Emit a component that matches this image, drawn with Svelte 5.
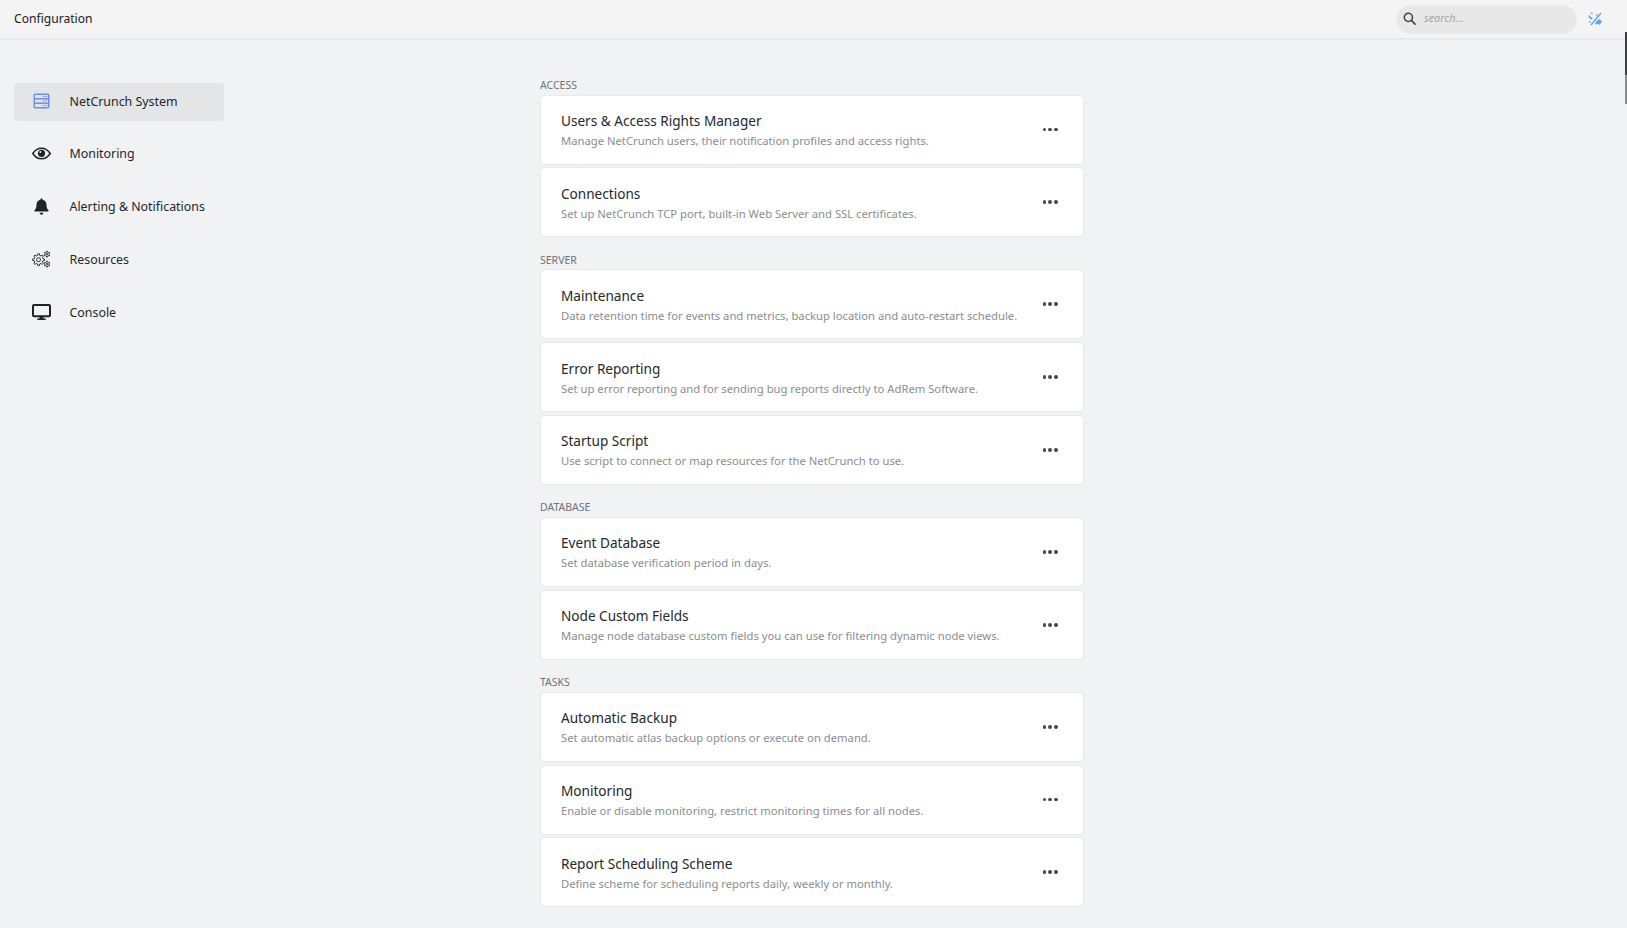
<script>
  function gear(cx, cy, rOut, rIn, teeth) {
    const pts = [];
    const step = (Math.PI * 2) / teeth;
    for (let i = 0; i < teeth; i++) {
      const a = i * step - Math.PI / 2;
      const w = step * 0.2;
      [[a - w * 1.5, rIn], [a - w * 0.8, rOut], [a + w * 0.8, rOut], [a + w * 1.5, rIn]].forEach(([t, r]) => {
        pts.push((cx + r * Math.cos(t)).toFixed(2) + ' ' + (cy + r * Math.sin(t)).toFixed(2));
      });
    }
    return 'M' + pts.join('L') + 'Z';
  }
  const nav = [
    { label: 'NetCrunch System', icon: 'server', active: true },
    { label: 'Monitoring', icon: 'eye' },
    { label: 'Alerting & Notifications', icon: 'bell' },
    { label: 'Resources', icon: 'gears' },
    { label: 'Console', icon: 'desktop' }
  ];
  const sections = [
    { title: 'ACCESS', items: [
      ['Users & Access Rights Manager', 'Manage NetCrunch users, their notification profiles and access rights.'],
      ['Connections', 'Set up NetCrunch TCP port, built-in Web Server and SSL certificates.']
    ]},
    { title: 'SERVER', items: [
      ['Maintenance', 'Data retention time for events and metrics, backup location and auto-restart schedule.'],
      ['Error Reporting', 'Set up error reporting and for sending bug reports directly to AdRem Software.'],
      ['Startup Script', 'Use script to connect or map resources for the NetCrunch to use.']
    ]},
    { title: 'DATABASE', items: [
      ['Event Database', 'Set database verification period in days.'],
      ['Node Custom Fields', 'Manage node database custom fields you can use for filtering dynamic node views.']
    ]},
    { title: 'TASKS', items: [
      ['Automatic Backup', 'Set automatic atlas backup options or execute on demand.'],
      ['Monitoring', 'Enable or disable monitoring, restrict monitoring times for all nodes.'],
      ['Report Scheduling Scheme', 'Define scheme for scheduling reports daily, weekly or monthly.']
    ]}
  ];
</script>

<div class="page">
  <header>
    <span class="title">Configuration</span>
    <div class="tools">
      <div class="search">
        <svg width="13" height="13" viewBox="0 0 14 14" fill="none" stroke="#444" stroke-width="1.7"><circle cx="5.8" cy="5.8" r="4.4"/><path d="M9 9l4 4" stroke-linecap="round"/></svg>
        <span class="ph">search...</span>
      </div>
      <svg class="magic" width="15" height="14" viewBox="0 0 15 14" fill="none" stroke="#5ba4f5" stroke-width="1.4">
        <path d="M3 13L13 1" />
        <path d="M1 3.5a4 4 0 0 0 3.5 3.2M3 .8l1.5 1.2" />
        <path d="M7 12.5l1-3 3.5-2.5 2.5 2.5-1 1-1 2.5-2-1z" fill="#5ba4f5" stroke="none"/>
        <path d="M8 3h1.5M1 10h1.5" />
      </svg>
    </div>
  </header>

  <div class="body">
    <nav>
      {#each nav as n}
        <div class="nav-item" class:active={n.active}>
          <span class="ico">
            {#if n.icon === 'server'}
              <svg width="17" height="16" viewBox="0 0 17 16"><rect x="0.5" y="0.5" width="16" height="15" rx="1.5" fill="#6f90e6"/><rect x="2" y="2" width="13" height="3" fill="#dfe2ec"/><rect x="2" y="6.5" width="13" height="3" fill="#dfe2ec"/><rect x="2" y="11" width="13" height="3" fill="#dfe2ec"/><rect x="10" y="3" width="1.5" height="1" fill="#6f8fe0"/><rect x="12.5" y="3" width="1.5" height="1" fill="#6f8fe0"/><rect x="10" y="7.5" width="1.5" height="1" fill="#6f8fe0"/><rect x="12.5" y="7.5" width="1.5" height="1" fill="#6f8fe0"/><rect x="10" y="12" width="1.5" height="1" fill="#6f8fe0"/><rect x="12.5" y="12" width="1.5" height="1" fill="#6f8fe0"/></svg>
            {:else if n.icon === 'eye'}
              <svg width="19" height="13" viewBox="0 0 19 13"><path d="M0.8 6.5C3 3 6 1.2 9.5 1.2S16 3 18.2 6.5C16 10 13 11.8 9.5 11.8S3 10 0.8 6.5z" fill="none" stroke="#1f2328" stroke-width="1.5"/><circle cx="9.5" cy="6.3" r="3.6" fill="#1f2328"/><circle cx="8.3" cy="5" r="1" fill="#f1f2f4"/></svg>
            {:else if n.icon === 'bell'}
              <svg width="15" height="17" viewBox="0 0 15 17"><path d="M7.5 0.5c.7 0 1.1.5 1.1 1.2 2.6.5 3.9 2.5 3.9 5 0 3 .7 4.3 2 5.6.4.5.1 1.2-.6 1.2H1.1c-.7 0-1-.7-.6-1.2 1.3-1.3 2-2.6 2-5.6 0-2.5 1.3-4.5 3.9-5 0-.7.4-1.2 1.1-1.2z" fill="#1f2328"/><path d="M5.6 14.8h3.8a1.9 1.9 0 0 1-3.8 0z" fill="#1f2328"/></svg>
            {:else if n.icon === 'gears'}
              <svg width="21" height="19" viewBox="0 0 21 19" fill="none" stroke="#2c3035" stroke-width="1.1" stroke-linejoin="round">
                <path d={gear(7.3, 9.7, 6.6, 4.9, 8)}/>
                <circle cx="7.3" cy="9.7" r="2.2"/>
                <path d={gear(16.6, 3.6, 3.2, 2.3, 6)}/>
                <circle cx="16.6" cy="3.6" r="0.9"/>
                <path d={gear(16.6, 14.6, 3.2, 2.3, 6)}/>
                <circle cx="16.6" cy="14.6" r="0.9"/>
              </svg>
            {:else}
              <svg width="19" height="17" viewBox="0 0 19 17"><rect x="1" y="1" width="17" height="11.2" rx="1" fill="none" stroke="#1f2328" stroke-width="2"/><path d="M7.5 12.5h4v2h2.2v1.6H5.3v-1.6h2.2z" fill="#1f2328"/></svg>
            {/if}
          </span>
          <span class="lbl">{n.label}</span>
        </div>
      {/each}
    </nav>

    <main>
      {#each sections as s}
        <section>
          <h2>{s.title}</h2>
          {#each s.items as it}
            <div class="card">
              <div class="txt">
                <div class="name">{it[0]}</div>
                <div class="desc">{it[1]}</div>
              </div>
              <div class="dots"><i></i><i></i><i></i></div>
            </div>
          {/each}
        </section>
      {/each}
    </main>
  </div>
  <div class="thumb"></div>
</div>

<style>
  :global(html), :global(body) { margin: 0; height: 100%; overflow: hidden; }
  .page {
    width: 1627px; height: 928px; background: #f1f2f4; position: relative; overflow: hidden;
    font-family: "Noto Sans", "Open Sans", sans-serif; color: #1f2328;
  }
  header {
    height: 38px; box-sizing: border-box; background: #f4f4f5; display: flex; align-items: center;
    justify-content: space-between; padding: 0 24px 0 14px;
    box-shadow: 0 1px 2px rgba(0,0,0,.07);
  }
  .title { font-size: 12.1px; line-height: 36px; color: #1c2024; }
  .tools { display: flex; align-items: center; gap: 12px; }
  .search {
    width: 179px; height: 27px; border-radius: 14px; background: #e8e8e9; box-sizing: border-box;
    display: flex; align-items: center; gap: 7px; padding: 0 0 1px 6px;
    font-size: 10.8px; font-style: italic; color: #a3a3a3; box-shadow: 0 0 0 1px #ececed;
  }
  .ph { position: relative; top: -1px; left: 1px; }
  .body { display: flex; }
  nav { width: 540px; box-sizing: border-box; padding: 45px 0 0 14px; }
  .nav-item {
    width: 210px; height: 38px; margin-bottom: 14.9px; display: flex; align-items: center;
    border-radius: 4px; font-size: 12.4px; color: #23272c;
  }
  .nav-item.active { background: #e4e5e7; }
  .lbl { position: relative; top: -1px; left: .5px; }
  .ico { box-sizing: border-box; display: flex; justify-content: center; width: 55px; padding: 0 18px; flex: none; position: relative; top: -1px; }
  main { width: 544px; padding-top: 37px; }
  section { margin-bottom: 12.7px; }
  h2 { margin: 0; height: 19.5px; font-size: 10.5px; font-weight: 400; color: #6f7276; line-height: 20px; }
  .card {
    height: 70px; box-sizing: border-box; background: #fff; border: 1px solid #e9eaec; border-radius: 5px;
    margin-bottom: 2.7px; display: flex; align-items: center; justify-content: space-between;
    padding: 0 20px;
  }
  .txt { padding-top: 2px; }
  .name { font-size: 13.6px; color: #24282c; line-height: 20px; }
  .desc { font-size: 11.25px; color: #8b8d90; line-height: 19px; }
  .dots { display: flex; gap: 2px; margin-right: 5px; }
  .dots i { width: 3.8px; height: 3.8px; border-radius: 50%; background: #45484d; }
  .thumb { position: absolute; right: 0; top: 32px; width: 2px; height: 72px; background: linear-gradient(#3c4045 0 60%, #8a8a8a 60%); }
</style>
